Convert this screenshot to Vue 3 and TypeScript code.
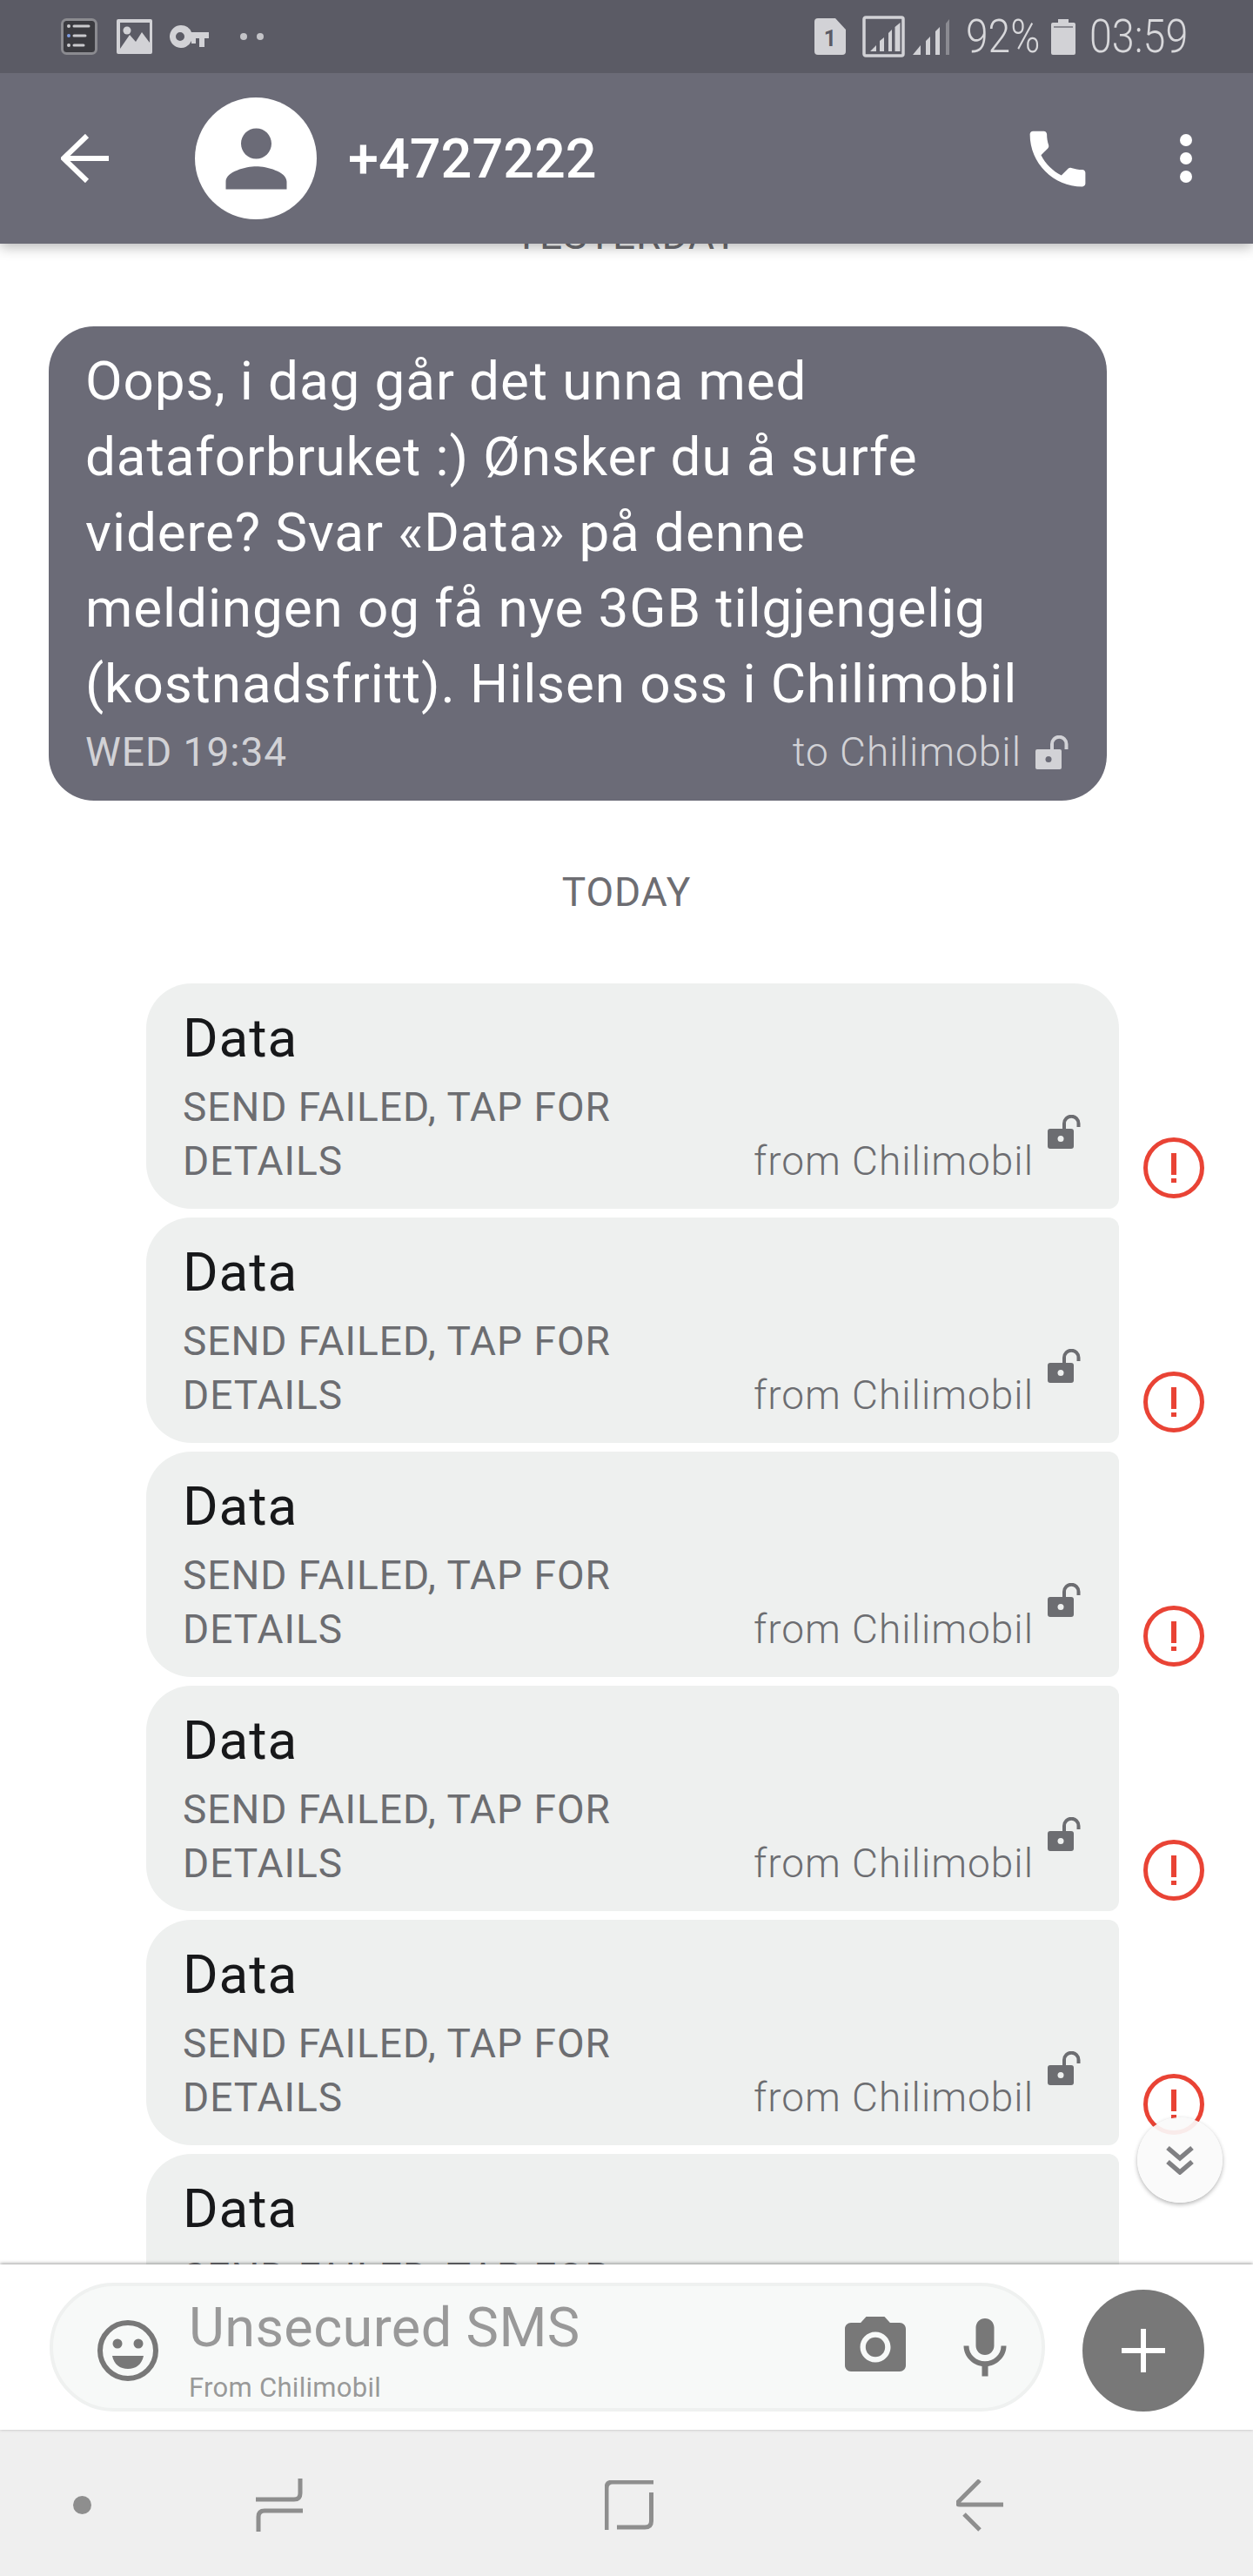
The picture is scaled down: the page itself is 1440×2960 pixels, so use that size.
<script setup lang="ts">
const rows: { id: number; first: boolean }[] = [1, 2, 3, 4, 5, 6].map((id) => ({ id, first: id === 1 }))
</script>

<template>
  <div class="phone">
    <div class="status">
      <div class="status-left">
        <svg width="42" height="42" viewBox="0 0 42 42">
          <rect x="1.5" y="1.5" width="39" height="39" rx="5" fill="#3b3b40" stroke="#8b8b90" stroke-width="3" />
          <path d="M15 9H32M15 20H28M15 31H26" stroke="#c9c9cc" stroke-width="3" stroke-linecap="round" />
          <circle cx="9" cy="9" r="2" fill="#c9c9cc" />
          <circle cx="9" cy="20" r="2" fill="#7d9be0" />
          <circle cx="9" cy="31" r="2" fill="#c9c9cc" />
        </svg>
        <svg width="41" height="40" viewBox="0 0 41 40">
          <path d="M2 0H39a2 2 0 0 1 2 2V38a2 2 0 0 1-2 2H2a2 2 0 0 1-2-2V2a2 2 0 0 1 2-2Z" fill="#d2d2d6" />
          <path d="M4 34L15 18L22 26L29 15L38 27V4H4Z" fill="#5b5b65" />
          <circle cx="12" cy="13" r="4.5" fill="#d2d2d6" />
        </svg>
        <svg class="key" width="45" height="26" viewBox="0 0 45 26">
          <path d="M13 0A13 13 0 0 1 25 8H45V15H40V25H34V15H30V21H25V18A13 13 0 1 1 13 0ZM12 8A5 5 0 1 0 12 18A5 5 0 1 0 12 8Z" fill="#d2d2d6" fill-rule="evenodd" />
        </svg>
        <span class="dots"><i></i><i></i></span>
      </div>
      <div class="status-right">
        <svg width="36" height="42" viewBox="0 0 36 42">
          <path d="M4 0H24L36 13V38a4 4 0 0 1-4 4H4a4 4 0 0 1-4-4V4a4 4 0 0 1 4-4Z" fill="#d2d2d6" />
          <text x="18" y="32" text-anchor="middle" font-family="Roboto" font-weight="700" font-size="25" fill="#5b5b65">1</text>
        </svg>
        <svg class="sig1" width="49" height="48" viewBox="0 0 49 48">
          <rect x="2" y="2" width="45" height="44" rx="2" fill="none" stroke="#d2d2d6" stroke-width="3.5" />
          <path d="M9 41H16V34ZM20 41H25V25L20 29ZM30 41H34V16L30 20ZM37.5 41H43.500V8L37.500 13Z" fill="#d2d2d6" />
        </svg>
        <svg class="sig2" width="42" height="41" viewBox="0 0 42 41">
          <path d="M0 41H9V30ZM15 41H20V20L15 25ZM26 41H31V9L26 14Z" fill="#d2d2d6" />
          <path d="M38 41H42V0L38 5Z" fill="#8b8b92" />
        </svg>
        <span class="stext pct">92%</span>
        <svg class="batt" width="28" height="41" viewBox="0 0 28 41">
          <path d="M8 0H20V4H26a2 2 0 0 1 2 2V39a2 2 0 0 1-2 2H2a2 2 0 0 1-2-2V6a2 2 0 0 1 2-2H8Z" fill="#d2d2d6" />
          <path d="M3 9H25" stroke="#8b8b92" stroke-width="2" />
        </svg>
        <span class="stext time">03:59</span>
      </div>
    </div>

    <header class="bar">
      <svg class="back" width="56" height="56" viewBox="0 0 56 56">
        <path d="M55 28H4M30 2L3 28L30 54" fill="none" stroke="#fff" stroke-width="6" />
      </svg>
      <div class="avatar">
        <svg width="105" height="105" viewBox="0 0 24 24">
          <path d="M12 12c2.210 0 4-1.790 4-4s-1.790-4-4-4-4 1.790-4 4 1.790 4 4 4zm0 2c-2.670 0-8 1.340-8 4v2h16v-2c0-2.660-5.330-4-8-4z" fill="#6b6b77" />
        </svg>
      </div>
      <div class="title">+4727222</div>
      <svg class="call" width="85" height="85" viewBox="0 0 24 24">
        <path d="M6.620 10.790c1.440 2.830 3.760 5.140 6.590 6.590l2.200-2.200c.27-.27.67-.36 1.020-.24 1.120.37 2.330.57 3.570.57.55 0 1 .45 1 1V20c0 .55-.45 1-1 1-9.390 0-17-7.610-17-17 0-.55.45-1 1-1h3.500c.55 0 1 .45 1 1 0 1.250.2 2.450.57 3.570.11.35.03.74-.25 1.020l-2.200 2.200z" fill="#fff" />
      </svg>
      <span class="kebab"><i></i><i></i><i></i></span>
    </header>

    <main class="thread">
      <div class="list">
        <div class="date">YESTERDAY</div>
        <article class="incoming">
          <p class="incoming-text">Oops, i dag går det unna med dataforbruket :) Ønsker du å surfe videre? Svar «Data» på denne meldingen og få nye 3GB tilgjengelig (kostnadsfritt). Hilsen oss i Chilimobil</p>
          <div class="incoming-meta">
            <span>WED 19:34</span>
            <span class="to">to Chilimobil
              <svg width="38" height="39" viewBox="0 0 38 39">
                <path d="M2 16H28a2 2 0 0 1 2 2V37a2 2 0 0 1-2 2H2a2 2 0 0 1-2-2V18a2 2 0 0 1 2-2Z" fill="#d2d2d6" />
                <circle cx="15" cy="27.500" r="3.500" fill="#6b6b77" />
                <path d="M19 17V10a8 8 0 0 1 16.500 0V16" fill="none" stroke="#d2d2d6" stroke-width="4" />
              </svg>
            </span>
          </div>
        </article>
        <div class="date">TODAY</div>
        <div class="rows">
          <div v-for="row in rows" :key="row.id" class="row">
            <article class="outgoing" :class="{ first: row.first }">
              <div class="body">Data</div>
              <div class="foot">
                <span class="failed">SEND FAILED, TAP FOR DETAILS</span>
                <span class="from">from Chilimobil</span>
                <svg class="lock" width="38" height="39" viewBox="0 0 38 39">
                  <path d="M3 16H27a3 3 0 0 1 3 3V36a3 3 0 0 1-3 3H3a3 3 0 0 1-3-3V19a3 3 0 0 1 3-3Z" fill="#6c6d71" />
                  <circle cx="15" cy="27.500" r="3.500" fill="#eef0ef" />
                  <path d="M19 17V10a8 8 0 0 1 16.500 0V14" fill="none" stroke="#6c6d71" stroke-width="4" />
                </svg>
              </div>
            </article>
            <svg class="alert" width="70" height="70" viewBox="0 0 70 70">
              <circle cx="35" cy="35" r="32.500" fill="#fff" stroke="#e94335" stroke-width="5" />
              <path d="M35 18V43M35 47V52" stroke="#e94335" stroke-width="6" />
            </svg>
          </div>
        </div>
      </div>
      <button class="down" type="button" aria-label="Scroll to latest">
        <svg width="32" height="34" viewBox="0 0 32 34">
          <path d="M2 3L16 15L30 3M2 19L16 31L30 19" fill="none" stroke="#808083" stroke-width="5.500" />
        </svg>
      </button>
    </main>

    <footer class="composer">
      <div class="pill">
        <svg class="emoji" width="70" height="70" viewBox="0 0 70 70">
          <circle cx="35" cy="35" r="32" fill="none" stroke="#787878" stroke-width="6" />
          <circle cx="23" cy="27" r="5.500" fill="#787878" />
          <circle cx="47" cy="27" r="5.500" fill="#787878" />
          <path d="M17 41H53C51 51 44 56 35 56S19 51 17 41Z" fill="#787878" />
        </svg>
        <div class="field">
          <div class="ph">Unsecured SMS</div>
          <div class="sub">From Chilimobil</div>
        </div>
        <svg class="cam" width="84" height="84" viewBox="0 0 24 24">
          <path d="M9 2L7.170 4H4c-1.100 0-2 .9-2 2v12c0 1.100.9 2 2 2h16c1.100 0 2-.9 2-2V6c0-1.100-.9-2-2-2h-3.170L15 2H9zm3 15c-2.760 0-5-2.240-5-5s2.240-5 5-5 5 2.240 5 5-2.240 5-5 5z" fill="#787878" />
          <circle cx="12" cy="12" r="3.200" fill="#787878" />
        </svg>
        <svg class="mic" width="84" height="84" viewBox="0 0 24 24">
          <path d="M12 14c1.660 0 2.990-1.340 2.990-3L15 5c0-1.660-1.340-3-3-3S9 3.340 9 5v6c0 1.660 1.340 3 3 3zm5.300-3c0 3-2.540 5.100-5.300 5.100S6.700 14 6.700 11H5c0 3.410 2.720 6.230 6 6.720V21h2v-3.280c3.280-.48 6-3.300 6-6.720h-1.700z" fill="#787878" />
        </svg>
      </div>
      <button class="fab" type="button" aria-label="Add">
        <svg width="50" height="50" viewBox="0 0 50 50">
          <path d="M25 0V50M0 25H50" stroke="#fff" stroke-width="6" />
        </svg>
      </button>
    </footer>

    <nav class="nav">
      <span class="dot"></span>
      <svg width="56" height="62" viewBox="0 0 56 62">
        <path d="M0 24H44Q51 24 51 17V0M54 37H10Q3 37 3 44V61" fill="none" stroke="#8e8e8e" stroke-width="5" />
      </svg>
      <svg width="58" height="58" viewBox="0 0 58 58">
        <path d="M2 57V9Q2 2 9 2H56M53.500 14V47Q53.500 54 46 54H14" fill="none" stroke="#8e8e8e" stroke-width="5" />
      </svg>
      <svg width="56" height="60" viewBox="0 0 56 60">
        <path d="M54 29H4Q0 29 2 26L27 1M9 40L27 58" fill="none" stroke="#8e8e8e" stroke-width="5" />
      </svg>
    </nav>
  </div>
</template>

<style>
html, body { margin: 0; background: #fff; }
</style>

<style scoped>
.phone {
  width: 1440px;
  height: 2960px;
  display: flex;
  flex-direction: column;
  font-family: Roboto, "Liberation Sans", sans-serif;
  background: #fff;
  overflow: hidden;
}
.status {
  height: 84px;
  flex: none;
  background: #5b5b65;
  display: flex;
  justify-content: space-between;
  align-items: center;
  padding: 0 76px 0 70px;
  box-sizing: border-box;
  position: relative;
  z-index: 3;
}
.status-left { display: flex; align-items: center; gap: 22px; }
.key { margin-left: -2px; }
.dots { display: flex; gap: 11px; margin-left: 14px; }
.dots i { width: 8px; height: 8px; border-radius: 50%; background: #c4c4c8; }
.status-right { display: flex; align-items: center; gap: 19px; }
.sig2 { margin-left: -10px; }
.stext {
  display: inline-block;
  height: 50px;
  line-height: 50px;
  font-size: 53px;
  font-weight: 300;
  color: #d8d8db;
  white-space: nowrap;
  transform-origin: left center;
}
.pct { width: 82px; transform: scaleX(.87); }
.time { width: 112px; transform: scaleX(.88); }
.batt { margin-left: -3px; }
.time { margin-left: -3px; }

.bar {
  height: 196px;
  flex: none;
  background: #6b6b77;
  display: flex;
  align-items: center;
  padding-left: 70px;
  box-shadow: 0 4px 14px rgba(0, 0, 0, .28);
  position: relative;
  z-index: 2;
}
.back { flex: none; }
.avatar {
  width: 140px;
  height: 140px;
  margin-left: 98px;
  border-radius: 50%;
  background: #fff;
  display: flex;
  align-items: center;
  justify-content: center;
  flex: none;
}
.title {
  margin-left: 36px;
  font-size: 63px;
  font-weight: 500;
  color: #fff;
  flex: 1;
}
.call { flex: none; }
.kebab {
  display: flex;
  flex-direction: column;
  gap: 7px;
  margin: 0 70px 0 98px;
}
.kebab i { width: 14px; height: 14px; border-radius: 50%; background: #fff; }

.thread {
  flex: 1;
  min-height: 0;
  overflow: hidden;
  position: relative;
  z-index: 1;
}
.list { margin-top: -115px; }
.date {
  height: 210px;
  display: flex;
  align-items: center;
  justify-content: center;
  font-size: 46px;
  letter-spacing: 1px;
  color: #6d6d72;
}
.incoming {
  margin: 0 168px 0 56px;
  height: 545px;
  box-sizing: border-box;
  padding: 19px 44px 0 42px;
  background: #6b6b77;
  border-radius: 52px;
  color: #fff;
}
.incoming-text {
  margin: 0;
  max-width: 1110px;
  font-size: 62px;
  line-height: 87px;
  letter-spacing: .9px;
}
.incoming-meta {
  margin-top: 10px;
  display: flex;
  justify-content: space-between;
  align-items: center;
  font-size: 46px;
  font-weight: 400;
  letter-spacing: 1px;
  line-height: 50px;
  color: #d2d2d6;
}
.to { display: flex; align-items: center; gap: 16px; font-weight: 300; }
.rows { display: flex; flex-direction: column; gap: 10px; padding-left: 168px; }
.row { display: flex; align-items: flex-end; }
.outgoing {
  width: 1118px;
  height: 259px;
  box-sizing: border-box;
  padding: 26px 44px 24px 42px;
  background: #eef0ef;
  border-radius: 52px 12px 12px 52px;
  flex: none;
}
.outgoing.first { border-top-right-radius: 52px; }
.body { font-size: 62px; line-height: 74px; color: #17181a; letter-spacing: .9px; }
.foot {
  margin-top: 11px;
  display: flex;
  align-items: flex-end;
  font-size: 46px;
  line-height: 62px;
  letter-spacing: 1px;
  color: #6c6d71;
}
.failed { width: 560px; flex: none; }
.from { margin-left: auto; font-weight: 300; }
.lock { margin: 0 0 45px 16px; flex: none; }
.alert { flex: none; margin: 0 0 12px 28px; }
.down {
  position: absolute;
  right: 35px;
  bottom: 71px;
  width: 98px;
  height: 98px;
  padding: 0;
  border: none;
  border-radius: 50%;
  background: rgba(250, 250, 250, .92);
  box-shadow: 0 2px 5px rgba(0, 0, 0, .3);
  display: flex;
  align-items: center;
  justify-content: center;
}

.composer {
  height: 190px;
  flex: none;
  box-sizing: border-box;
  padding: 0 56px 21px 57px;
  display: flex;
  align-items: flex-end;
  justify-content: space-between;
  background: #fff;
  box-shadow: 0 -1px 4px rgba(0, 0, 0, .4);
  position: relative;
  z-index: 2;
}
.pill {
  width: 1144px;
  height: 148px;
  box-sizing: border-box;
  border: 4px solid #eff1f0;
  border-radius: 74px;
  background: #f7f9f8;
  display: flex;
  align-items: center;
}
.emoji { margin: 8px 0 0 51px; flex: none; }
.field { margin-left: 35px; flex: 1; align-self: flex-start; }
.ph { margin-top: 11px; font-size: 63px; line-height: 74px; letter-spacing: .4px; color: #999; }
.sub { margin-top: 14px; font-size: 31px; line-height: 36px; letter-spacing: .3px; color: #999; }
.cam { flex: none; margin-right: 42px; }
.mic { flex: none; margin: 4px 23px 0 0; }
.fab {
  width: 140px;
  height: 140px;
  padding: 0;
  border: none;
  border-radius: 50%;
  background: #787878;
  display: flex;
  align-items: center;
  justify-content: center;
}

.nav {
  height: 168px;
  flex: none;
  background: #efefef;
  display: flex;
  align-items: center;
  box-sizing: border-box;
  padding-left: 84px;
}
.dot { width: 21px; height: 21px; border-radius: 50%; background: #8e8e8e; margin-top: 4px; }
.nav svg:nth-of-type(1) { margin: 6px 0 0 189px; }
.nav svg:nth-of-type(2) { margin: 6px 0 0 345px; }
.nav svg:nth-of-type(3) { margin: 6px 0 0 346px; }
</style>
